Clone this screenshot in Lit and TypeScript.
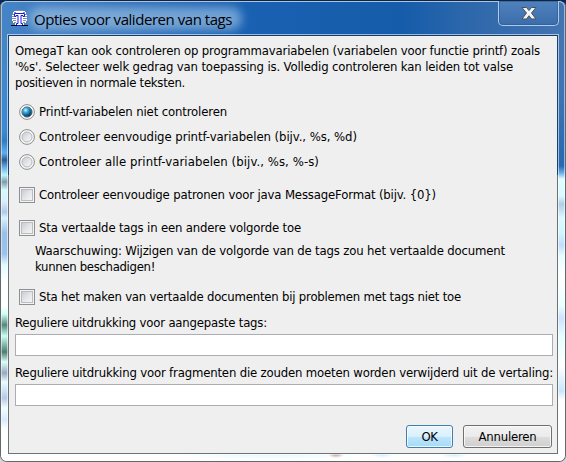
import { LitElement, html, css, svg } from "lit";
import { customElement, property } from "lit/decorators.js";

/** One line of text, tracked so that it takes a given width. */
@customElement("text-line")
class TextLine extends LitElement {
  @property({ type: Number }) width = 0;
  @property() text = "";
  static styles = css`
    :host { display: block; white-space: pre; }
    span { display: inline-block; }
  `;
  render() {
    return html`<span>${this.text}</span>`;
  }
  updated() {
    const el = this.renderRoot.querySelector("span") as HTMLElement;
    el.style.letterSpacing = "0px";
    const natural = el.getBoundingClientRect().width;
    el.style.letterSpacing = (this.width - natural) / this.text.length + "px";
  }
}

@customElement("option-row")
class OptionRow extends LitElement {
  @property() kind = "radio";
  @property({ type: Boolean }) checked = false;
  @property({ type: Number }) width = 0;
  @property() text = "";
  static styles = css`
    :host { display: flex; align-items: center; gap: 4px; height: 16px; }
    svg { display: block; width: 16px; height: 16px; flex: none; }
  `;
  render() {
    const radio = svg`
      <circle cx="8" cy="8" r="7.4" fill="#f8f8f8" stroke="#8b8c8d"/>
      <circle cx="8" cy="8" r="5" fill="url(#g)" stroke="${this.checked ? "#28506e" : "#b4b8bd"}"/>
      ${this.checked ? svg`<circle cx="8" cy="8" r="4.7" fill="url(#b)"/>` : ""}`;
    const box = svg`
      <rect x=".5" y=".5" width="15" height="15" fill="#f4f4f4" stroke="#8e8f8f"/>
      <rect x="2.5" y="2.5" width="11" height="11" fill="url(#g)" stroke="#b9bdc2"/>`;
    return html`<svg viewBox="0 0 16 16">
        <defs>
          <linearGradient id="g" x1="0" y1="0" x2="1" y2="1">
            <stop offset="0" stop-color="#c6cad1"/><stop offset=".55" stop-color="#e6e7ea"/><stop offset="1" stop-color="#f6f6f6"/>
          </linearGradient>
          <radialGradient id="b" cx=".35" cy=".3" r=".75">
            <stop offset="0" stop-color="#d8f6ff"/><stop offset=".3" stop-color="#45b4df"/><stop offset=".7" stop-color="#10628f"/><stop offset="1" stop-color="#0b2f4b"/>
          </radialGradient>
        </defs>
        ${this.kind === "radio" ? radio : box}
      </svg><text-line .width=${this.width} .text=${this.text}></text-line>`;
  }
}

@customElement("app-root")
class AppRoot extends LitElement {
  static styles = css`
    :host { display: block; width: 566px; height: 462px; overflow: hidden;
      background: linear-gradient(#062a5c 0, #0b2a52 100px, #bfc4c6 300px, #d6d6d6);
      font: 13px/16px "DejaVu Sans Condensed", "DejaVu Sans", sans-serif; font-stretch: condensed; color: #000; }
    .window { box-sizing: border-box; position: relative; width: 566px; height: 462px; padding: 0 7px 7px 7px;
      border: 1px solid #63686b; border-top-color: #10243d; border-radius: 7px; overflow: hidden;
      background: #fdffff; display: flex; flex-direction: column; }
    .glass { position: absolute; inset: 0; background:
        linear-gradient(90deg, #4584c6 0, #3b78bd 80px, #1a61b2 245px, #155caa 400px, #2e68ab 470px, #4474b2 566px) 0 0/100% 35px no-repeat,
        linear-gradient(#4385c8 0, #3b8ad4 95px, #2f7cc2 105px, #5bb0f5 117px, #315a8c 124px, #5ba0dd 130px, #b8f4ff 139px, #7d9cad 146px, #d2fbff 154px, #d9efff 165px, #aec8ee 176px, #d6f2ff 182px, #98bfe8 197px, #9bc3ef 218px, #e0fbff 229px, #fff 245px, #fff 270px, #ccfff5 278px, #55887c 289px, #c8fff0 300px, #4d7c73 316px, #d9fff8 326px, #96a9c0 337px, #e6ffff 346px, #b4c9e8 362px, #f2ffff 372px, #d6eaff 384px, #fff 393px) 0 35px/7px 100% no-repeat,
        linear-gradient(#4474b2 0, #3e74b6 60px, #2b6ab2 115px, #2769b2 130px, #6aaee8 137px, #e0fdff 143px, #d9faff 160px, #b1cce6 168px, #dcf9ff 182px, #d0f6ff 197px, #c3dcfb 209px, #e6fdff 220px, #fff 240px, #e9ffff 270px, #cfe0fc 282px, #e4ffff 300px, #fff 330px, #c8e5fc 355px, #fff 364px) 100% 35px/7px 100% no-repeat,
        radial-gradient(ellipse 8px 4px at 335px 453px, #b68f84, transparent),
        radial-gradient(ellipse 12px 4px at 381px 453px, #cbe6fc, transparent),
        radial-gradient(ellipse 14px 4px at 453px 453px, #cbe6fc, transparent),
        radial-gradient(ellipse 95px 6px at 270px 453px, #e2f8ff, transparent); }
    .edge { position: absolute; inset: 0; border-radius: 6px; box-shadow: inset 0 1px #a9c6e8, inset 1px 0 #ffffff80, inset -1px 0 #ffffff80; }
    .title { position: relative; height: 34px; flex: none; display: flex; align-items: flex-start; }
    .logo { position: relative; width: 17px; height: 17px; margin: 9px 6px 0 3px; }
    .caption { position: relative; font: 15px/20px "Open Sans", "Noto Sans", sans-serif; margin-top: 8px; }
    .glow { position: absolute; left: 21px; top: 6px; width: 213px; height: 23px; border-radius: 12px; background: #a9cbea; opacity: .6; filter: blur(5px); }
    .close { box-sizing: border-box; position: absolute; left: 490px; top: 0; width: 61px; height: 25px; border: 1px solid #b2cae5; border-top: 0; border-radius: 0 0 5px 5px;
      box-shadow: inset 0 0 0 1px #28589488; background: linear-gradient(#4f82bc, #3b6dac); }
    .close svg { display: block; width: 59px; height: 24px; }
    .client { box-sizing: border-box; position: relative; flex: 1; background: #efefef; border: 1px solid #6f7274; border-top-color: #163c68; outline: 1px solid #ffffff90; padding: 7px 5px 0 6px; display: flex; flex-direction: column; }
    .client::before { content: ""; position: absolute; left: -1px; right: -1px; top: -1px; height: 140px; border: solid #174270; border-width: 0 1px; }
    .options { padding-left: 4px; display: flex; flex-direction: column; }
    .radios { margin-top: 13px; display: flex; flex-direction: column; gap: 9px; }
    .c1, .c2 { margin-top: 17px; }
    .warn { margin: 7px 0 0 16px; }
    .c3 { margin-top: 14px; }
    .l1 { margin-top: 10px; }
    .l2 { margin-top: 9px; }
    .field { box-sizing: border-box; height: 22px; width: 538px; margin: 3px 0 0; border: 1px solid #abadb3; background: #fff; }
    .buttons { display: flex; justify-content: flex-end; gap: 10px; margin: 19px 0 0 0; }
    .btn { box-sizing: border-box; height: 23px; border: 1px solid #707070; border-radius: 3px; box-shadow: inset 0 0 0 1px #fcfcfccc;
      background: linear-gradient(#f2f2f2 0, #ebebeb 50%, #dddddd 50%, #cfcfcf); display: flex; align-items: center; justify-content: center; width: 89px; }
    .ok { width: 47px; border-color: #3c7fb1; background: linear-gradient(#eaf6fd 0, #d9f0fc 50%, #bee6fd 50%, #a7d9f5); }
  `;
  render() {
    const line = (width: number, text: string, cls = "") =>
      html`<text-line class=${cls} .width=${width} .text=${text}></text-line>`;
    const option = (kind: string, width: number, text: string, cls = "", checked = false) =>
      html`<option-row class=${cls} .kind=${kind} .width=${width} .text=${text} .checked=${checked}></option-row>`;
    return html`<div class="window">
      <div class="glass"></div><div class="edge"></div>
      <div class="title">
        <div class="glow"></div>
        <svg class="logo" viewBox="0 0 17 17">
          <path d="M5 0h7v1h2v1h1v2h1v7h-1v2h-2v2H4v-2H2v-2H1V4h1V2h1V1h2z" fill="#fff"/>
          <path d="M5 .5h7M3 2.500h2M12 2.500h2M1 4.500h2M14 4.500h2M1 6.500h4M12 6.500h4M1 8.500h4M12 8.500h4M2 10.500h3M12 10.500h3M3 12.500h2M12 12.500h2" stroke="#18202c" stroke-width=".5"/>
          <path d="M3.500 3.500h10v3h-1.500v-1h-2v8h1.500v2h-6v-2h1.500v-8h-2v1h-1.500z" fill="#fff" stroke="#1717e8"/>
          <path d="M0 15.500h6M11 15.500h6" stroke="#000"/>
        </svg>
        ${line(198, "Opties voor valideren van tags", "caption")}
        <div class="close"><svg viewBox="0 0 59 24">
          <path d="M23 6.500h4.500l2.500 3 2.500-3h4.500l-4.500 5.500 4.500 6h-4.500l-2.500-3.300-2.500 3.300h-4.500l4.500-6z" fill="#f4f4f4" stroke="#48515f" stroke-linejoin="round"/>
        </svg></div>
      </div>
      <div class="client">
        ${line(525, "OmegaT kan ook controleren op programmavariabelen (variabelen voor functie printf) zoals")}
        ${line(498, "'%s'. Selecteer welk gedrag van toepassing is. Volledig controleren kan leiden tot valse")}
        ${line(170, "positieven in normale teksten.")}
        <div class="options">
          <div class="radios">
            ${option("radio", 188, "Printf-variabelen niet controleren", "", true)}
            ${option("radio", 318, "Controleer eenvoudige printf-variabelen (bijv., %s, %d)")}
            ${option("radio", 280, "Controleer alle printf-variabelen (bijv., %s, %-s)")}
          </div>
          ${option("check", 397, "Controleer eenvoudige patronen voor java MessageFormat (bijv. {0})", "c1")}
          ${option("check", 262, "Sta vertaalde tags in een andere volgorde toe", "c2")}
          <div class="warn">
            ${line(470, "Waarschuwing: Wijzigen van de volgorde van de tags zou het vertaalde document")}
            ${line(120, "kunnen beschadigen!")}
          </div>
          ${option("check", 422, "Sta het maken van vertaalde documenten bij problemen met tags niet toe", "c3")}
        </div>
        ${line(252, "Reguliere uitdrukking voor aangepaste tags:", "l1")}
        <div class="field"></div>
        ${line(538, "Reguliere uitdrukking voor fragmenten die zouden moeten worden verwijderd uit de vertaling:", "l2")}
        <div class="field"></div>
        <div class="buttons">
          <div class="btn ok">${line(16, "OK")}</div>
          <div class="btn">${line(58, "Annuleren")}</div>
        </div>
      </div>
    </div>`;
  }
}
